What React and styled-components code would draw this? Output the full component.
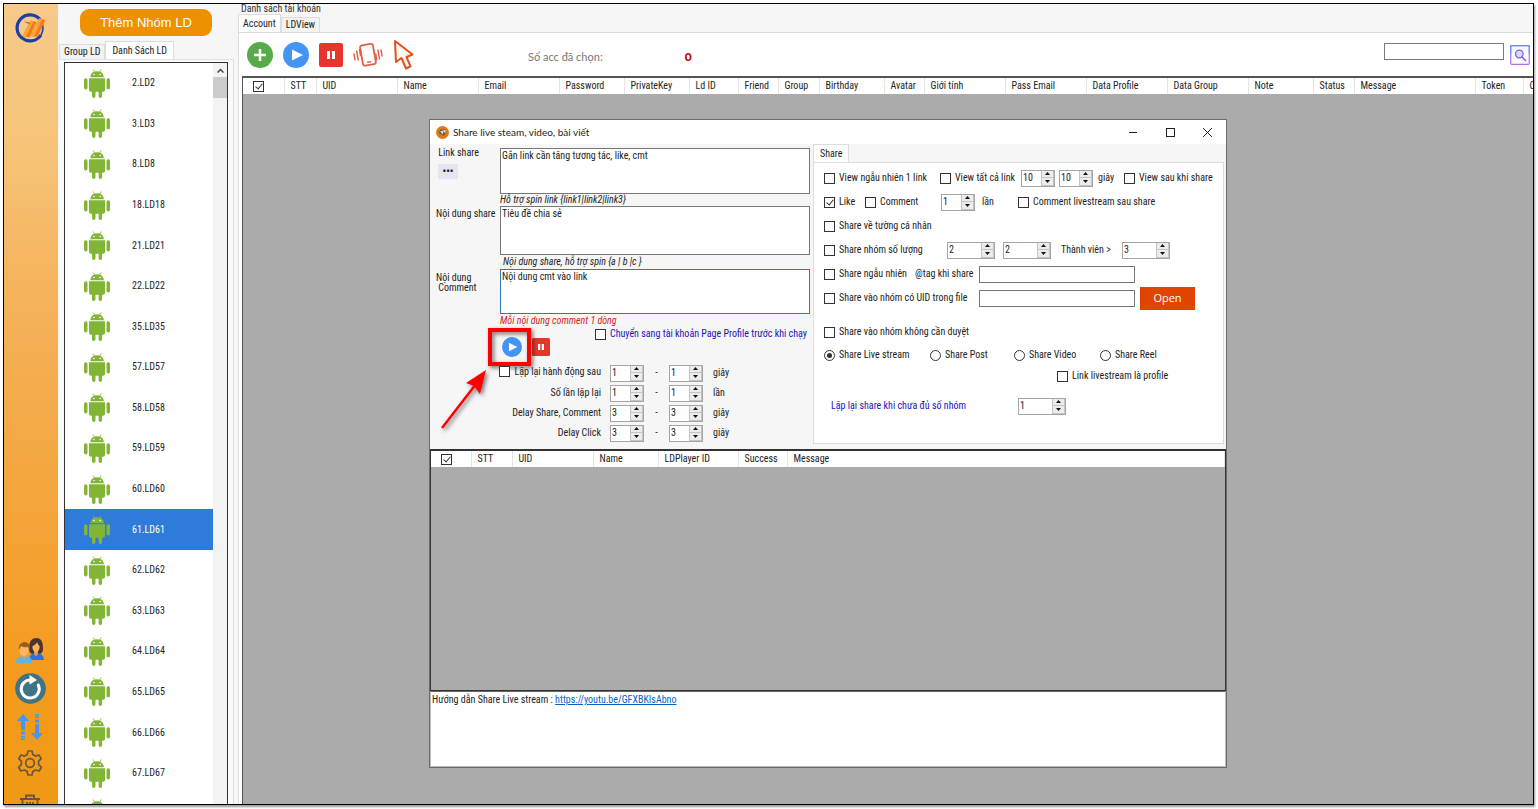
import React, { useState } from "react"
import styled, { createGlobalStyle } from "styled-components"

const GlobalStyle = createGlobalStyle`
    * { box-sizing: border-box; }
    body {
        margin: 0;
        background: #fff;
        font-family: "Roboto Condensed", Roboto, "Liberation Sans", sans-serif;
        font-size: 10px;
        line-height: 12px;
        color: #222;
    }
    button, input, textarea { font: inherit; color: inherit; }
`;

/* ---------- data ---------- */

const devices = [2, 3, 8, 18, 21, 22, 35, 57, 58, 59, 60, 61, 62, 63, 64, 65, 66, 67]

const accountColumns = [
    ["STT", 32], ["UID", 81], ["Name", 81], ["Email", 81], ["Password", 65],
    ["PrivateKey", 65], ["Ld ID", 49], ["Friend", 40], ["Group", 41], ["Birthday", 65],
    ["Avatar", 40], ["Giới tính", 81], ["Pass Email", 81], ["Data Profile", 81],
    ["Data Group", 81], ["Note", 65], ["Status", 41], ["Message", 121], ["Token", 48], ["Cookie", 60],
]

const shareColumns = [
    ["STT", 41], ["UID", 81], ["Name", 65], ["LDPlayer ID", 80], ["Success", 49], ["Message", null],
]

/* ---------- frame ---------- */

const Page = styled.div`
    height: 100vh;
    padding: 3px 4px 4px 3px;
`;

const Frame = styled.div`
    display: flex;
    height: 100%;
    overflow: hidden;
    border: 1px solid #000;
    box-shadow: 1px 2px 2px #999;
    background: #f6f6f6;
`;

const Sidebar = styled.nav`
    display: flex;
    flex-direction: column;
    align-items: center;
    width: 54px;
    flex: none;
    padding: 9px 2px 0 0;
    overflow: hidden;
    background: linear-gradient(#f7ca8b 0%, #f6c478 18%, #f5b35d 35%, #f4a63e 60%, #f49b1e 85%, #ee9a14 100%);
`;

const SideTools = styled.div`
    display: flex;
    flex-direction: column;
    align-items: center;
    gap: 10px;
    margin-top: auto;
    margin-bottom: -16px;
`;

const IconButton = styled.button`
    display: block;
    padding: 0;
    border: 0;
    background: none;
    line-height: 0;
    cursor: pointer;
`;

/* ---------- device panel ---------- */

const DevicePanel = styled.aside`
    display: flex;
    flex-direction: column;
    width: 176px;
    flex: none;
    padding-left: 1px;
`;

const AddGroup = styled.button`
    width: 132px;
    height: 27px;
    margin: 5px 0 5px 21px;
    flex: none;
    border: 0;
    border-radius: 9px;
    background: #ee9100;
    color: #fff;
    font-family: "Liberation Sans", sans-serif;
    font-size: 13px;
`;

const Tabs = styled.div`
    display: flex;
    align-items: flex-end;
    flex: none;
`;

const Tab = styled.button`
    height: ${p => p.$active ? "18px" : "15px"};
    padding: 0 ${p => p.$pad || 4}px;
    border: 1px solid #dcdcdc;
    border-bottom: 0;
    background: ${p => p.$active ? "#fff" : "#f3f3f3"};
    white-space: nowrap;
`;

const DeviceBox = styled.div`
    flex: 1;
    min-height: 0;
    padding: 2px 5px 0 5px;
    border-right: 1px solid #dcdcdc;
    border-top: 1px solid #e2e2e2;
    background: #fafafa;
`;

const DeviceFrame = styled.div`
    display: flex;
    height: 100%;
    overflow: hidden;
    border: 1px solid #333;
    border-bottom: 0;
    background: #fff;
`;

const DeviceList = styled.ul`
    display: flex;
    flex-direction: column;
    flex: 1;
    height: 771px;
    margin: 0;
    padding: 0;
    list-style: none;
`;

const DeviceRow = styled.li`
    display: flex;
    align-items: center;
    flex: 1;
    gap: 22px;
    padding-left: 19px;
    background: ${p => p.$selected ? "#2f7bd9" : "transparent"};
    color: ${p => p.$selected ? "#fff" : "#222"};
`;

const ScrollBar = styled.div`
    width: 14px;
    background: #f3f3f3;
`;

const ScrollArrow = styled.button`
    display: flex;
    align-items: center;
    justify-content: center;
    width: 100%;
    height: 14px;
    padding: 0;
    border: 0;
    background: none;
`;

const ScrollThumb = styled.div`
    height: 21px;
    background: #cbcbcb;
`;

/* ---------- account area ---------- */

const Main = styled.main`
    display: flex;
    flex-direction: column;
    flex: 1;
    min-width: 0;
    padding-left: 4px;
`;

const Legend = styled.h1`
    margin: -1px 0 0 3px;
    font-size: 10px;
    font-weight: 400;
    line-height: 11px;
    color: #333;
`;

const AccountPane = styled.section`
    display: flex;
    flex-direction: column;
    flex: 1;
    min-height: 0;
    padding-left: 3px;
    border-top: 1px solid #dcdcdc;
    border-left: 1px solid #dcdcdc;
    background: #fff;
`;

const Toolbar = styled.div`
    display: flex;
    align-items: center;
    flex: none;
    height: 43px;
    gap: 10px;
    padding: 0 3px 0 5px;
`;

const Selected = styled.p`
    display: flex;
    flex: 1;
    gap: 82px;
    margin: 4px 0 0 103px;
    font-family: Lato, sans-serif;
    font-size: 11px;
    color: #777;
    b { color: #c00000; font-size: 12px; font-weight: 900; }
`;

const SearchInput = styled.input`
    width: 120px;
    height: 17px;
    padding: 0 3px;
    margin: 0 -4px 6px 0;
    border: 1px solid #7a7a7a;
`;

const GridArea = styled.div`
    position: relative;
    flex: 1;
    min-height: 0;
    overflow: hidden;
    border-top: 2px solid #555;
    border-left: 1px solid #555;
    background: #ababab;
`;

const Grid = styled.table`
    width: 100%;
    table-layout: fixed;
    border-collapse: collapse;
    background: #fff;
    th {
        height: ${p => p.$height}px;
        padding: 0 0 0 6px;
        border-right: 1px solid #e4e4e4;
        font-weight: 400;
        text-align: left;
        white-space: nowrap;
        overflow: hidden;
    }
    th:first-child { padding-left: 10px; }
    th input { display: block; }
`;

/* ---------- share dialog ---------- */

const Dialog = styled.section`
    position: absolute;
    top: 41px;
    left: 186px;
    width: 798px;
    display: flex;
    flex-direction: column;
    border: 1px solid #6b6b6b;
    background: #f6f6f6;
`;

const TitleBar = styled.header`
    display: flex;
    align-items: center;
    height: 24px;
    padding: 0 11px 0 6px;
    gap: 4px;
    background: #fff;
    h2 {
        flex: 1;
        margin: 0;
        font-family: Lato, "Noto Sans", sans-serif;
        font-size: 10px;
        font-weight: 400;
    }
`;

const WindowButtons = styled.div`
    display: flex;
    gap: 21px;
`;

const DialogBody = styled.div`
    display: grid;
    grid-template-columns: 380px 1fr;
    height: 305px;
    gap: 3px;
`;

const ShareForm = styled.form`
    padding: 4px 0 0;
`;

const Field = styled.div`
    display: grid;
    grid-template-columns: 70px 1fr;
    label {
        padding: ${p => p.$top || 0}px 0 0 6px;
        line-height: 10px;
    }
`;

const FieldLabel = styled.div`
    display: flex;
    flex-direction: column;
    align-items: flex-start;
`;

const MoreButton = styled.button`
    width: 20px;
    height: 15px;
    margin: 6px 0 0 8px;
    padding: 0;
    border: 0;
    background: #e4e5ee;
    line-height: 8px;
    font-weight: 700;
`;

const TextArea = styled.textarea`
    display: block;
    width: 100%;
    height: ${p => p.$height}px;
    padding: 1px 1px;
    border: 1px solid ${p => p.$focus ? "#2b7cb0" : "#777"};
    outline: 0;
    resize: none;
    background: #fff;
`;

const Hint = styled.p`
    height: ${p => p.$height || 12}px;
    margin: 0 0 0 ${p => p.$indent || 70}px;
    line-height: ${p => p.$height || 12}px;
    font-style: italic;
    white-space: nowrap;
    color: ${p => p.$red ? "#d4222a" : "#222"};
`;

const ActionRow = styled.div`
    display: flex;
    align-items: flex-start;
    height: 35px;
    padding-left: 72px;
    gap: 10px;
`;

const RunButtons = styled.div`
    position: relative;
    display: flex;
    align-items: center;
    gap: 10px;
    width: 83px;
    padding-top: 9px;
`;

const Callout = styled.svg`
    position: absolute;
    left: -64px;
    top: -2px;
    pointer-events: none;
`;

const RepeatGrid = styled.div`
    display: grid;
    grid-template-columns: 180px 34px 25px 34px 1fr;
    grid-auto-rows: 20px;
    align-items: center;
    > .label { justify-self: end; padding-right: 9px; }
    > .dash { justify-self: center; }
    > .unit { padding-left: 10px; }
`;

const CheckLabel = styled.label`
    display: inline-flex;
    align-items: center;
    gap: 4px;
    white-space: nowrap;
    color: ${p => p.$blue ? "#1c12c4" : "inherit"};
`;

const CheckBox = styled.input`
    appearance: none;
    position: relative;
    width: 11px;
    height: 11px;
    margin: 0;
    flex: none;
    border: 1px solid #333;
    border-radius: ${p => p.type === "radio" ? "50%" : "0"};
    background: #fff;
    &[type="checkbox"]:checked::after {
        content: "";
        position: absolute;
        left: 3px;
        top: 0;
        width: 3px;
        height: 6px;
        border: solid #333;
        border-width: 0 1px 1px 0;
        transform: rotate(40deg);
    }
    &[type="radio"]:checked::after {
        content: "";
        position: absolute;
        inset: 2px;
        border-radius: 50%;
        background: #333;
    }
`;

const SpinBox = styled.span`
    display: inline-flex;
    width: ${p => p.$width || 34}px;
    height: 17px;
    border: 1px solid #a5a5a5;
    background: #fff;
    input {
        flex: 1;
        min-width: 0;
        padding: 0 0 1px 1px;
        border: 0;
        outline: 0;
        background: none;
        appearance: textfield;
    }
    input::-webkit-inner-spin-button { appearance: none; margin: 0; }
`;

const SpinArrows = styled.span`
    display: flex;
    flex-direction: column;
    width: 13px;
    button {
        display: flex;
        align-items: center;
        justify-content: center;
        flex: 1;
        padding: 0;
        border: 1px solid #c4c4c4;
        border-width: 0 1px 1px 1px;
        background: #ececec;
    }
`;

const ShareSide = styled.div`
    display: flex;
    flex-direction: column;
    padding: 0 2px 5px 0;
`;

const ShareOptions = styled.div`
    flex: 1;
    padding: 3px 0 0 10px;
    border: 1px solid #dcdcdc;
    background: #fff;
`;

const OptionRow = styled.div`
    display: grid;
    grid-template-columns: ${p => p.$cols};
    align-items: center;
    height: ${p => p.$height || 24}px;
    margin-bottom: ${p => p.$after || 0}px;
    white-space: nowrap;
`;

const TextInput = styled.input`
    width: 156px;
    height: 17px;
    padding: 0 3px;
    border: 1px solid #777;
`;

const OpenButton = styled.button`
    height: 23px;
    padding: 0;
    border: 0;
    background: #e14400;
    color: #fff;
    font-family: "Open Sans", sans-serif;
    font-size: 11px;
`;

const BlueText = styled.span`
    padding-left: 7px;
    color: #1c12c4;
`;

const ResultArea = styled.div`
    height: 242px;
    border: 1px solid #333;
    border-top-width: 2px;
    background: #ababab;
`;

const Guide = styled.p`
    height: 76px;
    margin: 0;
    padding: 2px 1px;
    border: 1px solid #bbb;
    border-top-color: #666;
    background: #fff;
    a { color: #0563c1; }
`;

/* ---------- icons ---------- */

const Android = () => (
    <svg width="26" height="29" viewBox="0 0 26 29" fill="#82b536">
        <path d="M6.3 8.2C6.5 5.6 8 3.7 10 2.8L8.5.5l.5-.3 1.7 2.3a9 9 0 0 1 4.8 0L17 .2l.6.3L16.2 2.8c2 .9 3.500 2.800 3.700 5.400z" />
        <path d="M5 9.300h16v11.700q0 1.800-1.800 1.800H6.800Q5 22.800 5 21z" />
        <rect x="0" y="9.300" width="3.500" height="11.200" rx="1.700" />
        <rect x="22.500" y="9.300" width="3.500" height="11.200" rx="1.700" />
        <path d="M8 22h3.500v5.200a1.750 1.750 0 0 1-3.500 0zM14.600 22h3.500v5.200a1.750 1.750 0 0 1-3.500 0z" />
        <circle cx="10" cy="5.500" r=".8" fill="#fff" />
        <circle cx="16.200" cy="5.500" r=".8" fill="#fff" />
    </svg>
)

const Logo = () => (
    <svg width="34" height="32" viewBox="0 0 34 32">
        <path d="M27 6.500A13 13 0 1 0 28 22" fill="none" stroke="#1a3fa6" strokeWidth="3.200" />
        <path d="M27 6.500a13.500 13.500 0 0 1 1 15.500" fill="none" stroke="#1a3fa6" strokeWidth="1.600" />
        <path d="M17.500 7.500l6 1.500-7 15.500-7-1.500z" fill="#f07d1a" />
        <path d="M26 5.500l6.500 1.500-8 17-7-1z" fill="#f07d1a" />
        <path d="M17.500 7.500l3 .7-7.500 15.500-3.500-.7zM26 5.500l3 .7-8 17.300-3.500-.5z" fill="#fba63c" />
        <path d="M11 8.500l4.500.5 2.500 2.500-3.500-1z" fill="#b8732c" />
    </svg>
)

const People = () => (
    <svg width="28" height="25" viewBox="0 0 28 25">
        <path d="M13 12C13 4 15 0 20.500 0S27 5 27 12q-1 4-4 4h-6q-3 0-4-4z" fill="#4e342e" />
        <path d="M13 22q0-7 7-7t8 6v1z" fill="#2c74dc" />
        <path d="M18 12h4v4l-2 2.500-2-2.500z" fill="#f09a3e" />
        <ellipse cx="20" cy="9" rx="3.600" ry="5" fill="#ffb464" />
        <path d="M16 8q4-1 5-4 1 3 3 4V5q-1-3-4-3t-4 3z" fill="#4e342e" />
        <path d="M0 25q0-7 8-7t8.500 7z" fill="#56b8ee" />
        <path d="M6 16h4v3l-2 2-2-2z" fill="#f09a3e" />
        <ellipse cx="8" cy="12.500" rx="4.600" ry="5.500" fill="#ffb464" />
        <path d="M3 12q-1-7 5-8 7 0 5.500 8l-1.500-3q-4 1-7-1z" fill="#9c5b25" />
    </svg>
)

const Refresh = () => (
    <svg width="31" height="31" viewBox="0 0 31 31">
        <circle cx="15.500" cy="15.500" r="15.300" fill="#3e7484" />
        <path d="M23.300 12a9 9 0 1 1-7.300-5" fill="none" stroke="#fff" strokeWidth="3" strokeLinecap="round" />
        <path d="M14.500 2l7.500 5-7.500 4.500z" fill="#fff" />
    </svg>
)

const Transfer = () => (
    <svg width="26" height="26" viewBox="0 0 26 26" fill="#4596f5">
        <path d="M6 0l6 7H8v9H4V7H0zM4 17.500h4v3H4zM4 22h4v1.500H4zM4 24.500h4V26H4z" />
        <path d="M20 26l6-7h-4v-9h-4v9h-4zM18 5.500h4v3h-4zM18 2.500h4V4h-4zM18 0h4v1.500h-4z" />
    </svg>
)

const Gear = () => (
    <svg width="26" height="26" viewBox="0 0 26 26" fill="none" stroke="#6b5542" strokeWidth="1.700" strokeLinejoin="round">
        <path d="M11 1h4l.8 3.600 2.600 1.500L22 5l2.200 3.600-2.600 2.600v3.400l2.800 2.600L22.200 21l-3.700-1-2.700 1.500L15 25h-4l-.8-3.500-2.700-1.500-3.700 1-2.200-3.700 2.800-2.700v-3.400L1.800 8.600 4 5l3.600 1.100 2.600-1.500z" />
        <circle cx="13" cy="13" r="4.300" />
    </svg>
)

const Trash = () => (
    <svg width="22" height="34" viewBox="0 -8 22 34" fill="none" stroke="#6b5542" strokeWidth="1.800">
        <path d="M1 5h20M7 4.500V1.500h8v3M3.500 5v20h15V5M8 8v13M11 8v13M14 8v13" />
    </svg>
)

const Plus = () => (
    <svg width="26" height="26" viewBox="0 0 26 26">
        <circle cx="13" cy="13" r="13" fill="#57aa48" />
        <path d="M13 7v12M7 13h12" stroke="#fff" strokeWidth="2.600" />
    </svg>
)

const Play = ({ size }) => (
    <svg width={size} height={size} viewBox="0 0 26 26">
        <circle cx="13" cy="13" r="13" fill="#4394f5" />
        <path d="M9 7.500v11L20 13z" fill="#fff" />
    </svg>
)

const Pause = ({ size }) => (
    <svg width={size} height={size} viewBox="0 0 24 24">
        <rect width="24" height="24" rx="2" fill="#e6352b" />
        <path d="M8 8h3v8H8zM13 8h3v8h-3z" fill="#fff" />
    </svg>
)

const Vibrate = () => (
    <svg width="30" height="26" viewBox="0 0 30 26" fill="none" stroke="#e2604a" strokeWidth="1.500" strokeLinecap="round">
        <rect x="8.500" y="2.500" width="13" height="20.500" rx="2" transform="rotate(-10 15 13)" strokeWidth="1.800" />
        <path d="M14.700 20.300l3-.5M1 12l1 6M3.700 9l1.500 9M6.500 7.500l1 6M22.800 12l1 6M25 8l1.500 9M28 8l1 6" />
    </svg>
)

const Pointer = () => (
    <svg width="22" height="32" viewBox="0 0 22 32">
        <path d="M2 2l1 21 5.500-4 4.500 10.500 4.500-2.200-4-9.300 6-2.500z" fill="#fff8f2" stroke="#e2501c" strokeWidth="2" strokeLinejoin="round" />
    </svg>
)

const SearchIcon = () => (
    <svg width="20" height="20" viewBox="0 0 20 20">
        <rect x=".7" y=".7" width="18.600" height="18.600" rx="1" fill="#fdfaff" stroke="#a675ee" strokeWidth="1.200" />
        <path d="M.7 9V.7h18.600V9" fill="none" stroke="#6a97ea" strokeWidth="1.200" />
        <circle cx="9.300" cy="9" r="3.800" fill="#cfe0ff" stroke="#7a63e2" strokeWidth="1.300" />
        <path d="M12 12l4 4" stroke="#a14fe0" strokeWidth="1.600" />
    </svg>
)

const AppIcon = () => (
    <svg width="13" height="13" viewBox="0 0 13 13">
        <circle cx="6.500" cy="6.500" r="6.500" fill="#dd7a16" />
        <path d="M2.500 7l2-3.500h5v4l-2 2.500-2-1.500z" fill="#5a5a62" />
        <path d="M4 5.500l3-1v4zM7.500 4h2v2.500h-2z" fill="#e7d9c8" />
    </svg>
)

const Arrow = ({ down }) => (
    <svg width="5" height="3" viewBox="0 0 5 3"><path d={down ? "M0 0h5L2.500 3z" : "M0 3h5L2.500 0z"} fill="#111" /></svg>
)

/* ---------- small parts ---------- */

const Check = ({ label, type = "checkbox", name, checked, blue }) => (
    <CheckLabel $blue={blue}>
        <CheckBox type={type} name={name} defaultChecked={checked} />
        {label}
    </CheckLabel>
)

const Spin = ({ value, width, label }) => {
    const [number, setNumber] = useState(value)
    return (
        <SpinBox $width={width}>
            <input type="number" aria-label={label} value={number} onChange={e => setNumber(Number(e.target.value))} />
            <SpinArrows>
                <button type="button" aria-label="+" onClick={() => setNumber(number + 1)}><Arrow /></button>
                <button type="button" aria-label="-" onClick={() => setNumber(number - 1)}><Arrow down /></button>
            </SpinArrows>
        </SpinBox>
    )
}

const HeaderGrid = ({ columns, height, first }) => (
    <Grid $height={height}>
        <colgroup>
            <col width={first} />
            {columns.map(([name, width]) => <col key={name} width={width || undefined} />)}
        </colgroup>
        <thead>
            <tr>
                <th><CheckBox type="checkbox" aria-label="All" defaultChecked /></th>
                {columns.map(([name]) => <th key={name}>{name}</th>)}
            </tr>
        </thead>
    </Grid>
)

const RepeatRow = ({ label, value, unit }) => (
    <>
        <span className="label">{label}</span>
        <Spin value={value} label={unit} />
        <span className="dash">-</span>
        <Spin value={value} label={unit} />
        <span className="unit">{unit}</span>
    </>
)

const ShareDialog = () => (
    <Dialog>
        <TitleBar>
            <AppIcon />
            <h2>Share live steam, video, bài viết</h2>
            <WindowButtons>
                <IconButton aria-label="Minimize"><svg width="16" height="12"><path d="M4 6.500h8" stroke="#222" /></svg></IconButton>
                <IconButton aria-label="Maximize"><svg width="16" height="12"><rect x="4.500" y="2.500" width="8" height="8" fill="none" stroke="#222" /></svg></IconButton>
                <IconButton aria-label="Close"><svg width="16" height="12"><path d="M4 2l9 9M13 2l-9 9" stroke="#222" /></svg></IconButton>
            </WindowButtons>
        </TitleBar>
        <DialogBody>
            <ShareForm>
                <Field>
                    <FieldLabel>
                        <label htmlFor="link">&nbsp;Link share</label>
                        <MoreButton type="button">•••</MoreButton>
                    </FieldLabel>
                    <TextArea id="link" $height={46} defaultValue="Gắn link cần tăng tương tác, like, cmt" />
                </Field>
                <Hint>Hỗ trợ spin link {"{link1|link2|link3}"}</Hint>
                <Field $top={3}>
                    <label htmlFor="content">Nội dung share</label>
                    <TextArea id="content" $height={49} defaultValue="Tiêu đề chia sẻ" />
                </Field>
                <Hint $height={14} $indent={73}>Nội dung share, hỗ trợ spin {"{a | b |c }"}</Hint>
                <Field $top={4}>
                    <label htmlFor="comment">Nội dung<br />&nbsp;Comment</label>
                    <TextArea id="comment" $height={45} $focus defaultValue="Nội dung cmt vào link" />
                </Field>
                <Hint $height={14} $red>Mỗi nội dung comment 1 dòng</Hint>
                <ActionRow>
                    <RunButtons>
                        <IconButton type="button" aria-label="Run"><Play size={20} /></IconButton>
                        <IconButton type="button" aria-label="Pause"><Pause size={18} /></IconButton>
                        <Callout width="116" height="110" viewBox="0 0 116 110">
                            <defs>
                                <filter id="drop" x="-20%" y="-20%" width="150%" height="150%">
                                    <feDropShadow dx="2" dy="2" stdDeviation="2" floodOpacity=".55" />
                                </filter>
                            </defs>
                            <g filter="url(#drop)">
                                <rect x="52" y="4" width="39" height="34" fill="none" stroke="#f00" strokeWidth="4" />
                                <path d="M4 102L38 58" stroke="#f00" strokeWidth="2.500" />
                                <path d="M48 44L42 68 36 60 28 57z" fill="#f00" />
                            </g>
                        </Callout>
                    </RunButtons>
                    <Check blue label="Chuyển sang tài khoản Page Profile trước khi chạy" />
                </ActionRow>
                <RepeatGrid>
                    <RepeatRow label={<Check label="Lặp lại hành động sau" />} value={1} unit="giây" />
                    <RepeatRow label="Số lần lặp lại" value={1} unit="lần" />
                    <RepeatRow label="Delay Share, Comment" value={3} unit="giây" />
                    <RepeatRow label="Delay Click" value={3} unit="giây" />
                </RepeatGrid>
            </ShareForm>
            <ShareSide>
                <Tabs><Tab $active $pad={6}>Share</Tab></Tabs>
                <ShareOptions>
                    <OptionRow $cols="116px 81px 38px 39px 26px 1fr">
                        <Check label="View ngẫu nhiên 1 link" />
                        <Check label="View tất cả link" />
                        <Spin value={10} label="Từ" />
                        <Spin value={10} label="Đến" />
                        <span>giây</span>
                        <Check label="View sau khi share" />
                    </OptionRow>
                    <OptionRow $cols="41px 76px 41px 36px 1fr">
                        <Check label="Like" checked />
                        <Check label="Comment" />
                        <Spin value={1} label="Số lần" />
                        <span>lần</span>
                        <Check label="Comment livestream sau share" />
                    </OptionRow>
                    <OptionRow $cols="1fr">
                        <Check label="Share về tường cá nhân" />
                    </OptionRow>
                    <OptionRow $cols="123px 56px 58px 61px 1fr">
                        <Check label="Share nhóm số lượng" />
                        <Spin value={2} width={48} label="Từ" />
                        <Spin value={2} width={48} label="Đến" />
                        <span>Thành viên &gt;</span>
                        <Spin value={3} width={48} label="Thành viên" />
                    </OptionRow>
                    <OptionRow $cols="91px 64px 1fr">
                        <Check label="Share ngẫu nhiên" />
                        <label htmlFor="tag">@tag khi share</label>
                        <TextInput id="tag" />
                    </OptionRow>
                    <OptionRow $cols="155px 161px 55px" $after={10}>
                        <Check label="Share vào nhóm có UID trong file" />
                        <TextInput aria-label="UID" />
                        <OpenButton type="button">Open</OpenButton>
                    </OptionRow>
                    <OptionRow $cols="1fr">
                        <Check label="Share vào nhóm không cần duyệt" />
                    </OptionRow>
                    <OptionRow $cols="106px 84px 86px 1fr" $height={22}>
                        <Check type="radio" name="kind" label="Share Live stream" checked />
                        <Check type="radio" name="kind" label="Share Post" />
                        <Check type="radio" name="kind" label="Share Video" />
                        <Check type="radio" name="kind" label="Share Reel" />
                    </OptionRow>
                    <OptionRow $cols="233px 1fr" $height={20} $after={8}>
                        <span />
                        <Check label="Link livestream là profile" />
                    </OptionRow>
                    <OptionRow $cols="194px 1fr">
                        <BlueText>Lặp lại share khi chưa đủ số nhóm</BlueText>
                        <Spin value={1} width={48} label="Lặp lại" />
                    </OptionRow>
                </ShareOptions>
            </ShareSide>
        </DialogBody>
        <ResultArea>
            <HeaderGrid columns={shareColumns} height={16} first={40} />
        </ResultArea>
        <Guide>
            Hướng dẫn Share Live stream : <a href="https://youtu.be/GFXBKIsAbno">https://youtu.be/GFXBKIsAbno</a>
        </Guide>
    </Dialog>
)

const App = () => {
    const [selected, setSelected] = useState(61)

    return (
        <Page>
            <GlobalStyle />
            <Frame>
                <Sidebar>
                    <Logo />
                    <SideTools>
                        <IconButton aria-label="Users"><People /></IconButton>
                        <IconButton aria-label="Refresh"><Refresh /></IconButton>
                        <IconButton aria-label="Transfer"><Transfer /></IconButton>
                        <IconButton aria-label="Settings"><Gear /></IconButton>
                        <IconButton aria-label="Delete"><Trash /></IconButton>
                    </SideTools>
                </Sidebar>

                <DevicePanel>
                    <AddGroup>Thêm Nhóm LD</AddGroup>
                    <Tabs>
                        <Tab>Group LD</Tab>
                        <Tab $active $pad={6}>Danh Sách LD</Tab>
                    </Tabs>
                    <DeviceBox>
                        <DeviceFrame>
                            <DeviceList>
                                {devices.map(id => (
                                    <DeviceRow key={id} $selected={id === selected} onClick={() => setSelected(id)}>
                                        <Android />
                                        {id}.LD{id}
                                    </DeviceRow>
                                ))}
                                <DeviceRow><Android /></DeviceRow>
                            </DeviceList>
                            <ScrollBar>
                                <ScrollArrow aria-label="Up">
                                    <svg width="7" height="5" viewBox="0 0 7 5"><path d="M.5 4.500l3-3 3 3" fill="none" stroke="#444" strokeWidth="1.500" /></svg>
                                </ScrollArrow>
                                <ScrollThumb />
                            </ScrollBar>
                        </DeviceFrame>
                    </DeviceBox>
                </DevicePanel>

                <Main>
                    <Legend>Danh sách tài khoản</Legend>
                    <Tabs>
                        <Tab $active>Account</Tab>
                        <Tab>LDView</Tab>
                    </Tabs>
                    <AccountPane>
                        <Toolbar>
                            <IconButton aria-label="Add"><Plus /></IconButton>
                            <IconButton aria-label="Play"><Play size={26} /></IconButton>
                            <IconButton aria-label="Pause"><Pause size={24} /></IconButton>
                            <IconButton aria-label="Vibrate"><Vibrate /></IconButton>
                            <IconButton aria-label="Pointer"><Pointer /></IconButton>
                            <Selected>Số acc đã chọn: <b>0</b></Selected>
                            <SearchInput type="search" aria-label="Search" />
                            <IconButton aria-label="Find"><SearchIcon /></IconButton>
                        </Toolbar>
                        <GridArea>
                            <HeaderGrid columns={accountColumns} height={16} first={41} />
                            <ShareDialog />
                        </GridArea>
                    </AccountPane>
                </Main>
            </Frame>
        </Page>
    )
}

export default App
